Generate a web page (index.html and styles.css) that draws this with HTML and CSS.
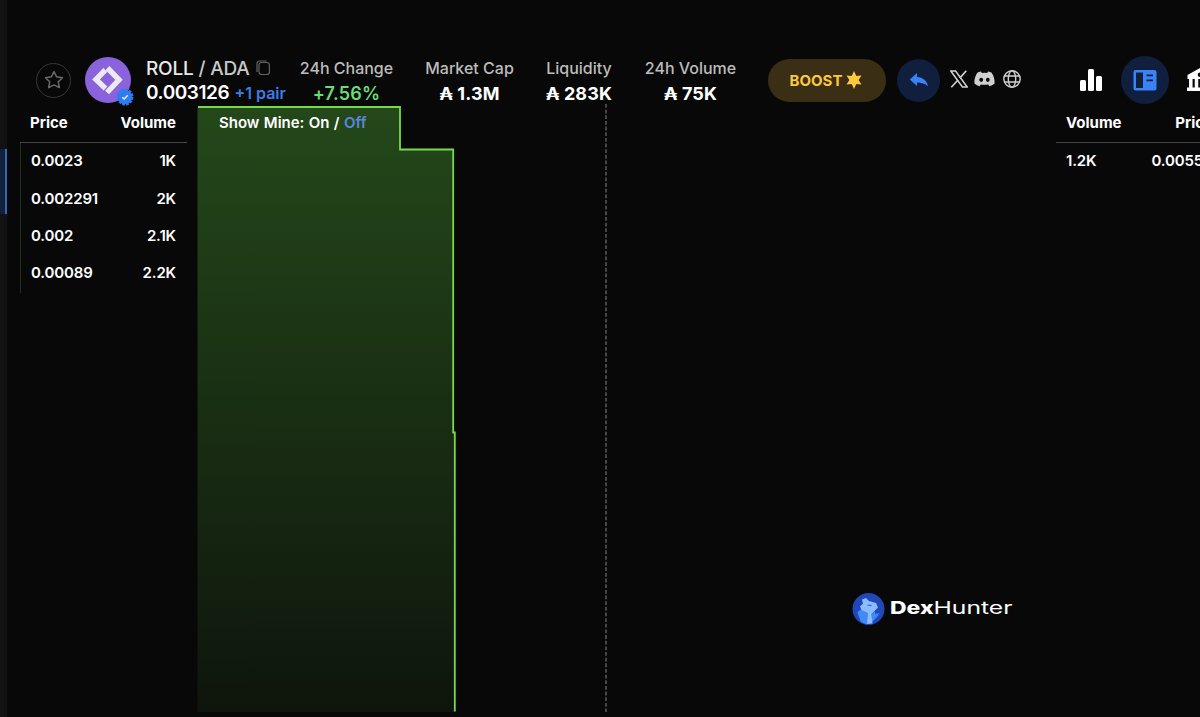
FILE: index.html
```
<!DOCTYPE html>
<html lang="en">
<head>
    <meta charset="UTF-8">
    <meta name="viewport" content="width=device-width, initial-scale=1.0">
    <title>ROLL / ADA</title>
    <link rel="stylesheet" href="styles.css">
</head>
<body>
  <aside class="rail"><div class="rail-active"></div></aside>

  <main>
    <header>
      <button class="star">
        <svg width="20" height="20" viewBox="0 0 20 20"><path d="M10 1.500l2.600 5.300 5.900.9-4.200 4.100 1 5.800-5.300-2.700-5.300 2.700 1-5.800L1.500 7.700l5.900-.9z" fill="none" stroke="#6a6a6d" stroke-width="1.500" stroke-linejoin="round"/></svg>
      </button>

      <div class="token">
        <svg width="46" height="46" viewBox="0 0 46 46">
          <circle cx="23" cy="23" r="23" fill="#8a63dc"/>
          <path d="M20.300 13L11 22.500l9.500 9M22.500 11L34 22.800 22 35.500" fill="none" stroke="#ece9f0" stroke-width="5.400"/>
        </svg>
        <svg class="verified" width="18" height="18" viewBox="0 0 18 18">
          <circle cx="9" cy="9" r="7.300" fill="#2f7bf2"/>
          <circle cx="9" cy="9" r="7.600" fill="none" stroke="#2f7bf2" stroke-width="1.800" stroke-dasharray="2.700 1.280"/>
          <path d="M6.300 9.200l1.900 1.800 3.500-3.700" fill="none" stroke="#e8f0ff" stroke-width="1.400"/>
        </svg>
      </div>

      <div class="pair">
        <div class="pair-name"><span><b>ROLL</b> / ADA</span>
          <svg width="14" height="16" viewBox="0 0 14 16" fill="none" stroke="#626265" stroke-width="1.200"><rect x="3" y="2.500" width="10.400" height="12" rx="2.500"/><path d="M1 12V3.500a2.500 2.500 0 0 1 2.500-2.500h7"/></svg>
        </div>
        <div class="pair-price">0.003126 <a>+1 pair</a></div>
      </div>

      <div class="stats">
        <div class="stat change"><span>24h Change</span><strong class="up">+7.56%</strong></div>
        <div class="stat cap"><span>Market Cap</span><strong>₳ 1.3M</strong></div>
        <div class="stat liquidity"><span>Liquidity</span><strong>₳ 283K</strong></div>
        <div class="stat volume"><span>24h Volume</span><strong>₳ 75K</strong></div>
      </div>

      <button class="boost">BOOST
        <svg width="16" height="18" viewBox="0 0 16 18"><path d="M8 0l2.300 5 5.200-.5L12.600 9l2.900 4.500-5.200-.5L8 18l-2.300-5-5.200.5L3.400 9 .5 4.500l5.200.5z" fill="#fcc93f"/></svg>
      </button>

      <button class="reply">
        <svg width="20" height="16" viewBox="0 0 20 16"><path d="M8 1v4c6 .5 10 3.500 11 9.500-3-3-6.500-4-11-4V14L.8 7.500z" fill="#3b82f6"/></svg>
      </button>

      <div class="social">
        <svg width="18" height="18" viewBox="0 0 18 18"><path d="M.8 1h4.800l11.600 16h-4.800z" fill="none" stroke="#cfcfcf" stroke-width="1.500"/><path d="M16.300.8l-6.500 7.300M8 10l-6.700 7.300" fill="none" stroke="#cfcfcf" stroke-width="1.700"/></svg>
        <svg width="21" height="16" viewBox="0 0 21 16"><path d="M7 .6C5.500.9 4.300 1.300 3.300 1.800 1.200 5 .2 8.500.4 12.500 2 13.800 3.700 14.700 5.600 15.200l1.200-1.800c2.400.6 5 .6 7.400 0l1.200 1.800c1.900-.5 3.600-1.400 5.200-2.700.2-4-.8-7.500-2.900-10.700-1-.5-2.200-.9-3.700-1.200l-.8 1.500a16 16 0 0 0-5.400 0z" fill="#cfcfcf"/><ellipse cx="7.200" cy="8.800" rx="1.900" ry="2.100" fill="#080808"/><ellipse cx="13.800" cy="8.800" rx="1.900" ry="2.100" fill="#080808"/></svg>
        <svg class="globe" width="18" height="18" viewBox="0 0 18 18" fill="none" stroke="#cfcfcf" stroke-width="1.400"><circle cx="9" cy="9" r="8.200"/><ellipse cx="9" cy="9" rx="3.700" ry="8.200"/><path d="M1.500 6h15M1.500 12h15"/></svg>
      </div>

      <nav class="views">
        <svg width="22" height="22" viewBox="0 0 22 22" fill="#fff"><rect x="0" y="11" width="6" height="11" rx="1.500"/><rect x="8" y="0" width="6" height="22" rx="1.500"/><rect x="16" y="7" width="6" height="15" rx="1.500"/></svg>
        <div class="view-active">
          <svg width="24" height="22" viewBox="0 0 24 22"><rect x=".5" y="1" width="23" height="20.500" rx="2.200" fill="#3b82f6"/><path d="M3 3.500h7v15.500H3z" fill="#101f3e"/><path d="M13.500 6.300h6.500M13.500 11.300h6.500" stroke="#101f3e" stroke-width="1.800"/></svg>
        </div>
        <svg width="26" height="24" viewBox="0 0 26 24"><path d="M13 0l12.500 7v4h-25V7zM0 19.500h26v3.500H0z" fill="#fff"/><path d="M3.800 10v10M9.500 10v10M16.500 10v10M22.200 10v10" stroke="#fff" stroke-width="3.500"/><circle cx="13" cy="6.800" r="2.300" fill="#080808"/></svg>
      </nav>
    </header>

    <section class="book">
      <div class="orders bids">
        <div class="orders-head"><span>Price</span><span>Volume</span></div>
        <div class="rows">
          <div class="row"><span>0.0023</span><span>1K</span></div>
          <div class="row"><span>0.002291</span><span>2K</span></div>
          <div class="row"><span>0.002</span><span>2.1K</span></div>
          <div class="row"><span>0.00089</span><span>2.2K</span></div>
        </div>
      </div>

      <div class="depth">
        <svg width="858" height="613" viewBox="0 0 858 613">
          <defs>
            <linearGradient id="bid" x1="0" y1="0" x2="0" y2="1">
              <stop offset="0" stop-color="#24481a"/>
              <stop offset="1" stop-color="#0e150c"/>
            </linearGradient>
          </defs>
          <path d="M-.5 3H202V45.500H255.200V328.500H257V608H-.5z" fill="url(#bid)"/>
          <path d="M0 3H202V45.500H255.200V328.500H256.800V607.500" fill="none" stroke="#74db50" stroke-width="1.800"/>
          <path d="M408 0V608" stroke="#707070" stroke-width="1.200" stroke-dasharray="3.800 1.850"/>
        </svg>
        <div class="show-mine">Show Mine: On / <a>Off</a></div>
        <div class="brand">
          <svg width="161" height="34" viewBox="0 0 161 34">
            <circle cx="16.500" cy="17" r="16" fill="#2148b8"/>
            <path d="M7 25l-1.500-5 4-3 5.500 4v11.500l-6-2.500zM20 22l2.500-3 1 3 4-1-2.500 4-5 5z" fill="#3f8af5"/>
            <path d="M10 7.500l4-1.500 3 3 7 2 2 4.500-3.500 3.500-3 3 1 9.500-5.500.5.500-11-6-3-1.500-3.500 3-3z" fill="#8bbcff"/>
            <path d="M15.500 13l4 .6" stroke="#2f62cf" stroke-width="1.200"/>
            <text x="38" y="22.200" class="dex" textLength="43.500" lengthAdjust="spacingAndGlyphs">Dex</text>
            <text x="81.500" y="22.200" class="hunter" textLength="79" lengthAdjust="spacingAndGlyphs">Hunter</text>
          </svg>
        </div>
      </div>

      <div class="orders asks">
        <div class="orders-head"><span>Volume</span><span>Price</span></div>
        <div class="row"><span>1.2K</span><span>0.0055</span></div>
      </div>
    </section>
  </main>
</body>
</html>
```
FILE: styles.css
```
* {
    box-sizing: border-box;
}
body {
    margin: 0;
    height: 717px;
    display: flex;
    overflow: hidden;
    background: #080808;
    color: #fff;
    font-family: Inter, "Liberation Sans", sans-serif;
}
svg {
    display: block;
    flex-shrink: 0;
}
button {
    border: none;
    padding: 0;
    font-family: inherit;
    display: flex;
    align-items: center;
    justify-content: center;
    flex-shrink: 0;
}
.rail {
    width: 7px;
    flex-shrink: 0;
    padding-top: 149px;
    background: #121214;
}
.rail-active {
    height: 65px;
    background: #14213a;
    border-right: 2px solid #3566b4;
}
main {
    width: 1193px;
    flex-shrink: 0;
    overflow: hidden;
}

/* top bar */
header {
    height: 104px;
    padding: 56px 0 0 29px;
    display: flex;
    align-items: center;
}
.star {
    width: 35px;
    height: 35px;
    border: 1px solid #38383a;
    border-radius: 50%;
    background: none;
}
.token {
    position: relative;
    margin-left: 14px;
}
.verified {
    position: absolute;
    left: 31px;
    top: 31px;
}
.pair {
    width: 142px;
    margin-left: 15px;
    flex-shrink: 0;
    white-space: nowrap;
}
.pair-name {
    display: flex;
    align-items: center;
    gap: 6px;
    height: 24px;
    font-size: 19px;
    font-weight: 500;
    letter-spacing: -0.2px;
    color: #c8c8c8;
}
.pair-name b {
    font-weight: 500;
    color: #e8e8e8;
}
.pair-price {
    height: 24px;
    line-height: 25px;
    font-size: 19px;
    font-weight: 600;
    letter-spacing: -0.45px;
}
.pair-price a {
    margin-left: 1px;
    font-size: 16px;
    font-weight: 600;
    letter-spacing: 0;
    color: #3b7de8;
}
.stats {
    display: flex;
    width: 480px;
    flex-shrink: 0;
}
.stat {
    display: flex;
    flex-direction: column;
    align-items: center;
    white-space: nowrap;
    flex-shrink: 0;
    padding-top: 1px;
}
.change { width: 117px; }
.cap { width: 129px; }
.liquidity { width: 90px; }
.volume { width: 133px; }
.stat span {
    line-height: 25px;
    font-size: 16px;
    font-weight: 500;
    color: #bcbcbc;
}
.stat strong {
    line-height: 25px;
    font-size: 18px;
    font-weight: 700;
    letter-spacing: 0.1px;
}
.stat .up {
    color: #68dc76;
    font-weight: 600;
    letter-spacing: 0.2px;
}
.boost {
    width: 118px;
    height: 43px;
    gap: 4px;
    padding-right: 2px;
    border-radius: 22px;
    background: #3a2f14;
    color: #fcc93f;
    font-size: 15px;
    font-weight: 700;
}
.reply {
    width: 43px;
    height: 43px;
    margin-left: 11px;
    border-radius: 50%;
    background: #101f3e;
}
.social {
    display: flex;
    align-items: center;
    gap: 6px;
    margin-left: 10px;
    padding-bottom: 2px;
}
.globe {
    margin-left: 2px;
}
.views {
    display: flex;
    align-items: center;
    margin-left: 59px;
}
.view-active {
    width: 48px;
    height: 48px;
    margin: 0 18px 0 19px;
    display: flex;
    align-items: center;
    justify-content: center;
    border-radius: 50%;
    background: #101f3e;
}

/* order book */
.book {
    display: flex;
    padding-left: 13px;
}
.orders {
    width: 167px;
    flex-shrink: 0;
    font-size: 15px;
    font-weight: 600;
}
/* runs past the right edge of the window */
.asks {
    width: 168px;
}
.asks .row {
    padding-right: 21px;
}
.orders-head,
.row {
    display: flex;
    justify-content: space-between;
    align-items: center;
    padding: 0 11px 0 10px;
}
.orders-head {
    height: 39px;
    padding-bottom: 2px;
    border-bottom: 1px solid #454545;
    font-weight: 700;
}
.bids .rows {
    border-left: 1px solid #203019;
}
.row {
    height: 37.400px;
    padding-bottom: 2px;
    letter-spacing: -0.15px;
}
.depth {
    position: relative;
    width: 858px;
    margin-left: 11px;
    flex-shrink: 0;
}
.depth > svg {
    overflow: visible;
}
.show-mine {
    position: absolute;
    left: 21px;
    top: 9px;
    font-size: 15px;
    font-weight: 600;
    word-spacing: 0.6px;
}
.show-mine a {
    font-weight: 600;
    color: #5b86df;
}
.brand {
    position: absolute;
    left: 654px;
    top: 488px;
}
.dex,
.hunter {
    font-size: 17px;
    fill: #fff;
}
.dex {
    font-weight: 800;
}
.hunter {
    font-weight: 400;
}
```
